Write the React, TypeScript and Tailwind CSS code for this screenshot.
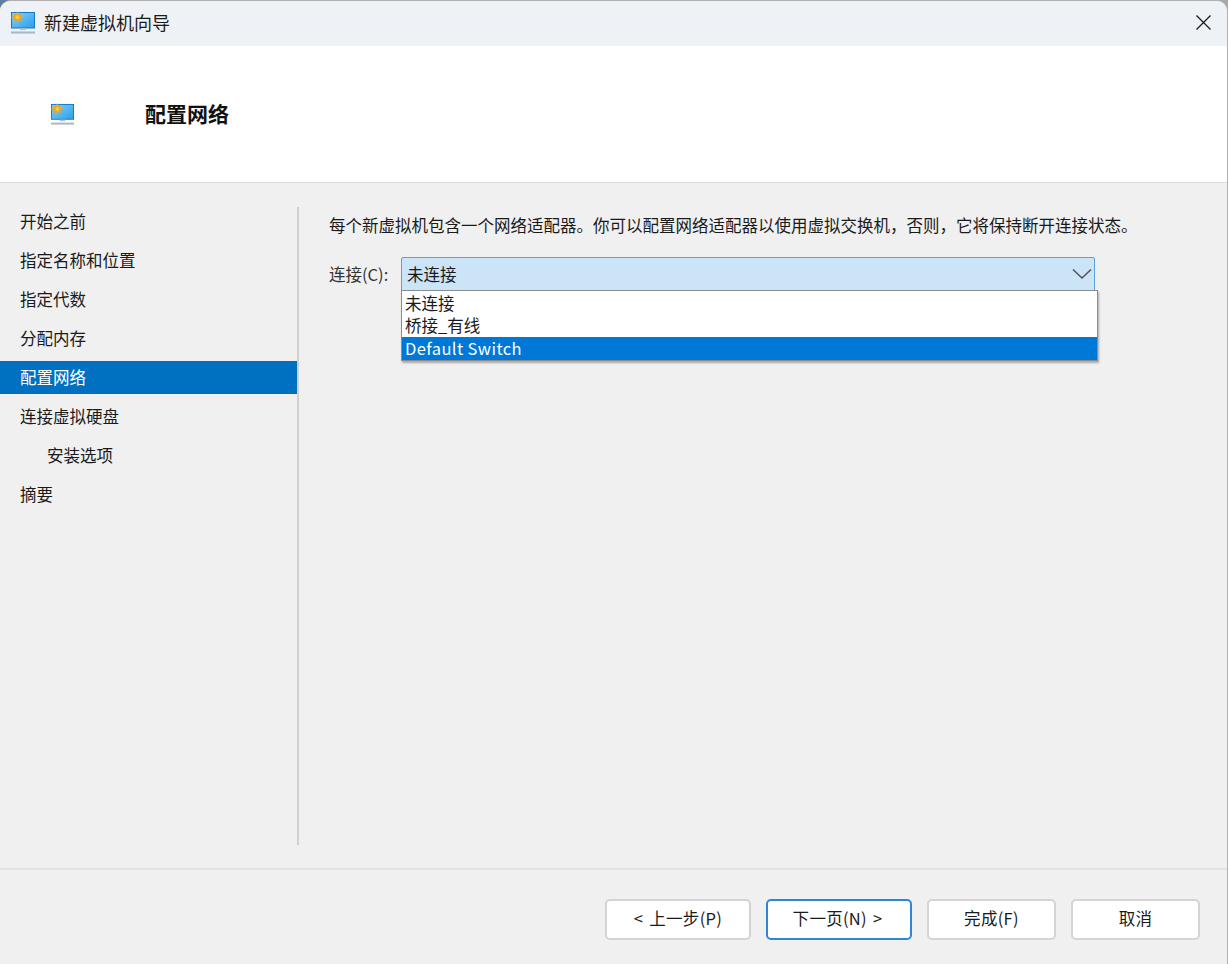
import React from "react";

const font = { fontFamily: '"Noto Sans CJK SC", "Liberation Sans", sans-serif' };

function MonitorIcon({ className }: { className: string }) {
  return (
    <svg viewBox="0 0 26 24" className={className}>
      <defs>
        <linearGradient id="scr" x1="0" y1="0" x2="1" y2="1">
          <stop offset="0" stopColor="#7fd0fa" />
          <stop offset="1" stopColor="#2f9fe8" />
        </linearGradient>
      </defs>
      <rect x="1" y="1" width="24" height="16.5" fill="#1678c4" />
      <rect x="2" y="2" width="22" height="14.5" fill="url(#scr)" />
      <rect x="10" y="17.5" width="6" height="1.6" fill="#b5c4d0" />
      <rect x="1" y="20.5" width="24" height="2" fill="#a5b6c4" />
      <path
        d="M7.5 0L8.8 3.4L11.8 1.6L10.4 4.8L14.5 6.2L10.4 7.6L11.8 10.8L8.8 9L7.5 12.4L6.2 9L3.2 10.8L4.6 7.6L0.5 6.2L4.6 4.8L3.2 1.6L6.2 3.4Z"
        fill="#f5a51a"
      />
      <circle cx="7.5" cy="6.2" r="2" fill="#fdc83c" />
    </svg>
  );
}

const steps = [
  { label: "开始之前" },
  { label: "指定名称和位置" },
  { label: "指定代数" },
  { label: "分配内存" },
  { label: "配置网络", active: true },
  { label: "连接虚拟硬盘" },
  { label: "安装选项", indent: true },
  { label: "摘要" },
];

function Btn({ label, w, primary }: { label: string; w: string; primary?: boolean }) {
  return (
    <div
      className={`${w} h-[41px] flex items-center justify-center rounded-[5px] bg-white text-[16.5px] tracking-[0.3px] text-[#1a1a1a] pb-[2px] ${
        primary ? "border-2 border-[#2f86d6] pr-[3px]" : "border-2 border-[#d4d4d4]"
      }`}
      style={{ wordSpacing: "2px" }}
    >
      {label}
    </div>
  );
}

export default function App() {
  return (
    <div className="w-[1228px] h-[964px] overflow-hidden bg-linear-to-r from-[#5f7f9f] to-[#a8a8a8] relative" style={font}>
      <div className="w-full h-full flex flex-col bg-[#f0f0f0] rounded-t-[11px] overflow-hidden border-t border-r border-[#b0b0b0]">
        <div className="h-[45px] shrink-0 flex items-center bg-[#eef2f7] pl-[10px] pr-[16px] pb-[2px]">
          <MonitorIcon className="w-[26px] h-[24px]" />
          <span className="ml-[8px] text-[18px] leading-none text-[#1a1a1a] pb-[1px]">新建虚拟机向导</span>
          <svg viewBox="0 0 15 15" className="ml-auto w-[15px] h-[15px]">
            <path d="M0.5 0.5L14.5 14.5M14.5 0.5L0.5 14.5" stroke="#1a1a1a" strokeWidth="1.3" fill="none" />
          </svg>
        </div>
        <div className="h-[137px] shrink-0 flex items-center bg-white border-b border-[#dcdcdc]">
          <MonitorIcon className="ml-[50px] w-[25px] h-[23px]" />
          <span className="ml-[70px] text-[21px] font-bold leading-none text-[#111] pb-[2px]">配置网络</span>
        </div>
        <div className="h-[685px] shrink-0 flex">
          <div className="w-[297px] shrink-0 pt-[22px] flex flex-col gap-[6px]">
            {steps.map((s) => (
              <div
                key={s.label}
                className={`h-[33px] flex items-center text-[16.5px] leading-none ${s.indent ? "pl-[47px]" : "pl-[20px]"} ${
                  s.active ? "bg-[#0070c0] text-white" : "text-[#1a1a1a]"
                }`}
              >
                {s.label}
              </div>
            ))}
          </div>
          <div className="w-[2px] h-[638px] mt-[24px] shrink-0 bg-[#d0d0d0]" />
          <div className="pl-[30px] pt-[30px] flex-1">
            <div className="text-[16.5px] leading-[24px] text-[#1a1a1a] whitespace-nowrap">
              每个新虚拟机包含一个网络适配器。你可以配置网络适配器以使用虚拟交换机，否则，它将保持断开连接状态。
            </div>
            <div className="mt-[20px] flex items-center">
              <span className="w-[72px] text-[16.5px] leading-none text-[#333] whitespace-nowrap">连接(C):</span>
              <div className="relative w-[694px] h-[34px] bg-[#cce4f7] border border-[#5a9fe0] flex items-center pl-[5px] rounded-t-[2px]">
                <span className="text-[16.5px] leading-none text-[#1a1a1a]">未连接</span>
                <svg viewBox="0 0 20 12" className="ml-auto mr-[2px] w-[20px] h-[12px]">
                  <path d="M1 1.5L10 10L19 1.5" stroke="#555" strokeWidth="1.6" fill="none" />
                </svg>
                <div className="absolute left-[-1px] top-[32px] w-[697px] h-[71px] z-10 bg-white border border-[#8c8c8c] shadow-[1px_2px_2px_rgba(0,0,0,0.3)] flex flex-col text-[16.5px] text-[#1a1a1a]">
                  <div className="h-[23px] flex items-center pl-[3px] pt-[2px] leading-none">未连接</div>
                  <div className="h-[23px] flex items-center pl-[3px] leading-none">桥接_有线</div>
                  <div className="h-[23px] flex items-center pl-[3px] leading-none bg-[#0078d7] text-white tracking-[0.4px]">Default Switch</div>
                </div>
              </div>
            </div>
          </div>
        </div>
        <div className="flex-1 border-t-2 border-[#e2e2e2] flex items-start justify-end pt-[29px] pr-[27px] gap-[15px]">
          <Btn label="< 上一步(P)" w="w-[146px]" />
          <Btn label="下一页(N) >" w="w-[146px]" primary />
          <Btn label="完成(F)" w="w-[129px]" />
          <Btn label="取消" w="w-[129px]" />
        </div>
      </div>
    </div>
  );
}
